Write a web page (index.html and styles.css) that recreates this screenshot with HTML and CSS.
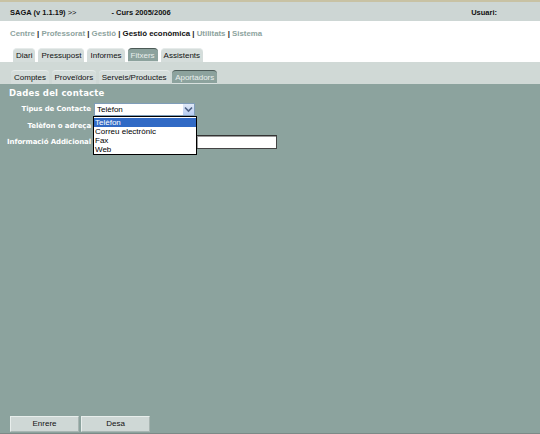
FILE: index.html
```html
<!DOCTYPE html>
<html>
<head>
<meta charset="utf-8">
<link rel="stylesheet" href="styles.css">
</head>
<body>
<div class="page">
  <div class="topbar">
    <span class="app">SAGA (v 1.1.19) <span class="gt">&gt;&gt;</span></span>
    <span class="curs">- Curs 2005/2006</span>
    <span class="user">Usuari:</span>
  </div>
  <div class="navarea">
    <div class="links">
      <span class="lnk">Centre</span> | <span class="lnk">Professorat</span> | <span class="lnk">Gestió</span> | <span class="cur">Gestió econòmica</span> | <span class="lnk">Utilitats</span> | <span class="lnk">Sistema</span>
    </div>
    <div class="tabs">
      <span class="tab">Diari</span>
      <span class="tab">Pressupost</span>
      <span class="tab">Informes</span>
      <span class="tab active">Fitxers</span>
      <span class="tab">Assistents</span>
    </div>
  </div>
  <div class="subband">
    <div class="tabs sub">
      <span class="tab">Comptes</span>
      <span class="tab">Proveïdors</span>
      <span class="tab">Serveis/Productes</span>
      <span class="tab active">Aportadors</span>
    </div>
  </div>
  <div class="content">
    <div class="title">Dades del contacte</div>
    <div class="form">
      <div class="row">
        <span class="label">Tipus de Contacte</span>
        <div class="select">
          <span class="selval">Telèfon</span>
          <span class="arrow"><svg width="9" height="7" viewBox="0 0 9 7"><path d="M1 1.5 L4.5 5 L8 1.5" fill="none" stroke="#4d6185" stroke-width="1.6"/></svg></span>
          <div class="dropdown">
            <div class="opt sel">Telèfon</div>
            <div class="opt">Correu electrònic</div>
            <div class="opt">Fax</div>
            <div class="opt">Web</div>
          </div>
        </div>
      </div>
      <div class="row r2">
        <span class="label">Telèfon o adreça</span>
      </div>
      <div class="row r3">
        <span class="label">Informació Addicional</span>
        <span class="input"></span>
      </div>
    </div>
    <div class="spacer"></div>
    <div class="buttons">
      <span class="btn">Enrere</span>
      <span class="btn">Desa</span>
    </div>
  </div>
</div>
</body>
</html>
```

FILE: styles.css
```css
html, body {
  margin: 0;
  padding: 0;
}
body {
  font-family: "Liberation Sans", Arial, sans-serif;
  font-size: 8px;
  color: #000;
  background: #8ca39e;
}
.page {
  width: 540px;
  height: 434px;
  display: flex;
  flex-direction: column;
  overflow: hidden;
}
.topbar {
  border-top: 2px solid #c8c2a4;
  background: #cdd6d4;
  display: flex;
  align-items: center;
  padding-left: 10px;
  padding-top: 2px;
  font-family: "Liberation Sans", Arial, sans-serif;
  font-weight: bold;
  font-size: 7.5px;
  color: #111;
  box-sizing: border-box;
  height: 21px;
}
.gt { font-weight: normal; }
.curs { margin-left: 35px; }
.user { margin-left: auto; margin-right: 43px; }
.navarea {
  background: #fff;
  height: 41px;
  display: flex;
  flex-direction: column;
  padding-left: 10px;
}
.links {
  font-family: "Liberation Sans", Arial, sans-serif;
  font-size: 7.85px;
  font-weight: bold;
  color: #222;
  margin-top: 8px;
}
.lnk { color: #8da39e; }
.cur { color: #111; }
.tabs {
  display: flex;
  gap: 3px;
  margin-top: auto;
  padding-left: 3px;
}
.tab {
  background: #d5dddb;
  border-radius: 4px 4px 0 0;
  height: 13px;
  line-height: 14px;
  padding: 0 3px;
  font-size: 8px;
  color: #111;
  border-top: 1px solid #e6ebea;
}
.tabs.sub {
  gap: 2.5px;
}
.tab.active {
  background: #8ca29d;
  color: #e8eeec;
  border-top: 1px solid #4c5a57;
  box-shadow: inset 0 -1px 0 #d8e0de;
}
.subband {
  background: #d0d9d6;
  height: 22px;
  display: flex;
  flex-direction: column;
  padding-left: 8px;
}
.content {
  flex: 1;
  background: #8ca39e;
  display: flex;
  flex-direction: column;
}
.title {
  font-family: "DejaVu Sans", Verdana, sans-serif;
  font-weight: bold;
  font-size: 8.5px;
  color: #fff;
  padding-left: 9px;
  margin-top: 4px;
  letter-spacing: 0.2px;
}
.form {
  margin-top: 4px;
}
.row {
  display: flex;
  align-items: center;
  height: 14px;
}
.r2 { margin-top: 3px; }
.r3 { margin-top: 2px; }
.label {
  width: 91px;
  text-align: right;
  font-family: "DejaVu Sans", Verdana, sans-serif;
  font-weight: bold;
  font-size: 7px;
  color: #fff;
  letter-spacing: -0.1px;
  white-space: nowrap;
}
.select {
  position: relative;
  margin-left: 3px;
  width: 101px;
  height: 13px;
  box-sizing: border-box;
  background: #fff;
  border: 1px solid #7f9db9;
  display: flex;
  align-items: center;
}
.selval {
  padding-left: 2px;
  font-size: 8px;
  flex: 1;
}
.arrow {
  width: 11px;
  height: 11px;
  background: linear-gradient(#dfe8f7, #b8cdf2);
  display: flex;
  align-items: center;
  justify-content: center;
}
.dropdown {
  position: absolute;
  left: -2px;
  top: 12px;
  width: 104px;
  background: #fff;
  border: 1px solid #000;
  box-sizing: border-box;
  padding-top: 1px;
  z-index: 5;
}
.opt {
  height: 9px;
  line-height: 9px;
  font-size: 8px;
  padding-left: 1px;
}
.opt.sel {
  background: #316ac5;
  color: #fff;
}
.input {
  margin-left: 105px;
  width: 81px;
  height: 14px;
  box-sizing: border-box;
  background: #fff;
  border: 1px solid #444;
  border-top-color: #333;
  box-shadow: inset 1px 1px 0 #999;
}
.spacer { flex: 1; }
.buttons {
  display: flex;
  gap: 2px;
  padding-left: 10px;
  padding-bottom: 1px;
  border-bottom: 1px solid #7c8a87;
}
.btn {
  width: 69px;
  height: 16px;
  box-sizing: border-box;
  background: #cfd8d6;
  border: 1px solid #e8eeec;
  border-right-color: #a8b5b2;
  border-bottom-color: #a8b5b2;
  text-align: center;
  line-height: 14px;
  font-size: 8px;
  color: #111;
}
```
